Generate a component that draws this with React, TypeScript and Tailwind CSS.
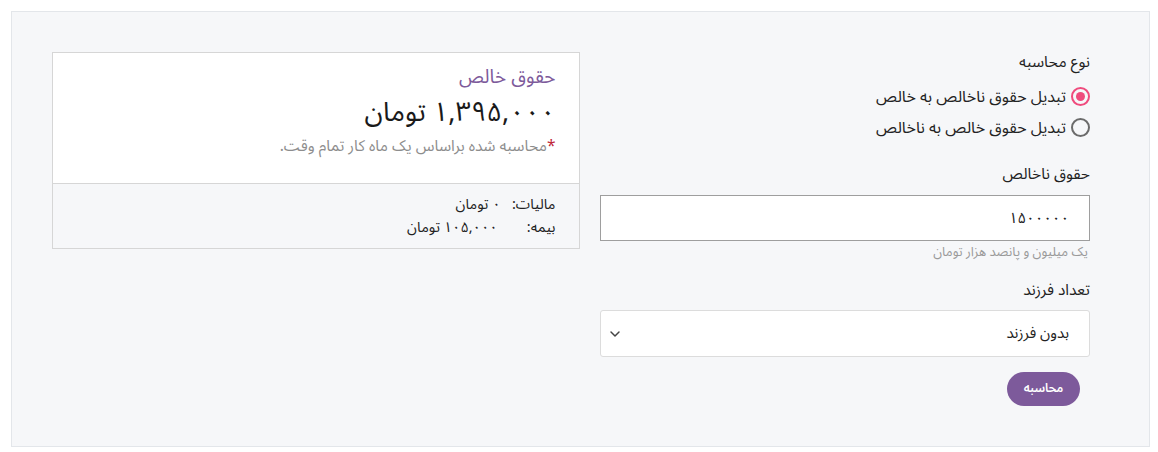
import { ChevronDown } from "lucide-react";

const font = { fontFamily: '"Noto Sans Arabic", "DejaVu Sans", sans-serif' };

const Radio = ({ checked, label }: { checked?: boolean; label: string }) => (
  <label className="flex items-center gap-[5px] text-[16px] text-[#222] h-[31px]">
    <span
      className={
        checked
          ? "w-[19px] h-[19px] rounded-full border-2 border-[#ef4b7d] flex items-center justify-center"
          : "w-[19px] h-[19px] rounded-full border-2 border-[#6b6b6b]"
      }
    >
      {checked && <span className="w-[9px] h-[9px] rounded-full bg-[#ef4b7d]" />}
    </span>
    <span>{label}</span>
  </label>
);

export default function App() {
  return (
    <div className="w-[1158px] h-[452px] bg-white p-[11px] pr-[8px]" style={font}>
      <div dir="rtl" className="h-[436px] border border-[#e3e6ea] bg-[#f6f7f9] flex items-start gap-[20px] pt-[40px] pr-[59px] pl-[40px]">
        {/* form column */}
        <div className="w-[490px] flex flex-col">
          <div className="text-[15.5px] text-[#222] leading-[22px] -mt-[1px]">نوع محاسبه</div>
          <div className="mt-[8px] flex flex-col">
            <Radio checked label="تبدیل حقوق ناخالص به خالص" />
            <Radio label="تبدیل حقوق خالص به ناخالص" />
          </div>

          <div className="text-[15.5px] text-[#222] leading-[22px] mt-[20px]">حقوق ناخالص</div>
          <div className="mt-[10px] h-[46px] bg-white border border-[#9e9e9e] flex items-center pr-[20px] text-[15px] text-[#222]">
            ۱۵۰۰۰۰۰
          </div>
          <div className="text-[13px] text-[#9a9a9a] leading-[18px] mt-[2px] pr-[2px]">یک میلیون و پانصد هزار تومان</div>

          <div className="text-[15.5px] text-[#222] leading-[22px] mt-[18px]">تعداد فرزند</div>
          <div className="mt-[9px] h-[47px] bg-white border border-[#dcdcdc] rounded-[3px] flex items-center justify-between pr-[20px] pl-[6px] text-[15px] text-[#222]">
            <span>بدون فرزند</span>
            <ChevronDown className="w-[16px] h-[16px] text-[#444]" strokeWidth={2.2} />
          </div>

          <div className="mt-[15px] pr-[10px] flex">
            <button className="w-[73px] h-[34px] rounded-full bg-[#7d5a9b] text-white text-[12px] font-semibold">
              محاسبه
            </button>
          </div>
        </div>

        {/* result card */}
        <div className="w-[529px] border border-[#d6d6d6] bg-white">
          <div className="px-[24px] pt-[10px] pb-[26px]">
            <div className="text-[19px] text-[#7d5a9b] leading-[28px]">حقوق خالص</div>
            <div className="text-[27px] text-[#1a1a1a] leading-[40px] mt-[2px]">۱,۳۹۵,۰۰۰ تومان</div>
            <div className="text-[15.5px] text-[#8d8d8d] leading-[22px] mt-[2px]">
              <span className="text-[#c0263a]">*</span>محاسبه شده براساس یک ماه کار تمام وقت.
            </div>
          </div>
          <div className="border-t border-[#d6d6d6] bg-[#f6f7f9] px-[24px] pt-[9px] pb-[9px] text-[14.5px] text-[#222] leading-[23px]">
            <div className="flex">
              <span className="w-[55px]">مالیات:</span>
              <span>۰ تومان</span>
            </div>
            <div className="flex">
              <span className="w-[58px]">بیمه:</span>
              <span>۱۰۵,۰۰۰ تومان</span>
            </div>
          </div>
        </div>
      </div>
    </div>
  );
}
